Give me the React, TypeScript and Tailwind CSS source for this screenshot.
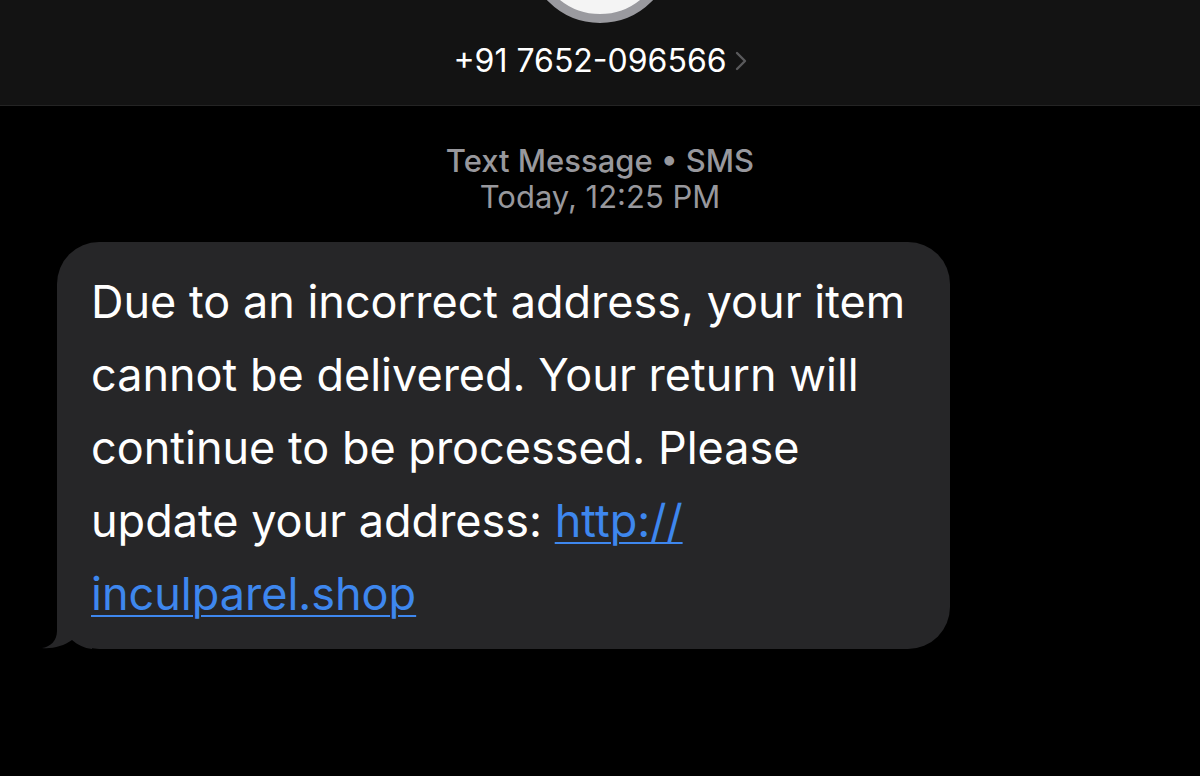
export default function App() {
  return (
    <div
      className="flex h-[776px] w-[1200px] flex-col overflow-hidden bg-black text-white"
      style={{ fontFamily: 'Inter, "Liberation Sans", sans-serif' }}
    >
      {/* contact header */}
      <header className="flex h-[106px] shrink-0 flex-col items-center border-b border-[#242424] bg-[#131313]">
        <div className="-mt-[123px] h-[146px] w-[146px] shrink-0 rounded-full border-[9px] border-[#9a9a9f] bg-[#f4f4f4]" />
        <div className="mt-[20px] flex items-center gap-[8px] text-[32px] leading-[36px]">
          <span>+91 7652-096566</span>
          <svg width="12" height="20" viewBox="0 0 12 20" fill="none">
            <path d="M2 2l8 8-8 8" stroke="#5a5a5c" strokeWidth="2.4" strokeLinecap="round" strokeLinejoin="round" />
          </svg>
        </div>
      </header>

      {/* thread */}
      <div className="flex flex-col items-center pt-[37px] text-[31px] leading-[36px] text-[#98989d]">
        <div className="font-medium">Text Message • SMS</div>
        <div>Today, 12:25&nbsp;PM</div>
      </div>

      <div className="pl-[57px] pt-[27px]">
        <div className="relative w-[893px] rounded-[42px] bg-[#262628] pb-[19px] pl-[34px] pr-[30px] pt-[23px] text-[45px] leading-[73px] text-white">
          <svg
            className="absolute bottom-0 left-[-15px]"
            width="50"
            height="44"
            viewBox="0 0 50 44"
          >
            <path
              d="M15 0 L15 26 C15 36 8 42 0 43 C10 44 22 41 30 35 C36 40 42 43 50 44 L50 0 Z"
              fill="#262628"
            />
          </svg>
          <p className="relative">
            Due to an incorrect address, your item
            <br />
            cannot be delivered. Your return will
            <br />
            continue to be processed. Please
            <br />
            update your address:{' '}
            <a className="text-[#3e87ee] underline decoration-[2px] underline-offset-[5px]">http://</a>
            <br />
            <a className="text-[#3e87ee] underline decoration-[2px] underline-offset-[5px]">inculparel.shop</a>
          </p>
        </div>
      </div>
    </div>
  )
}
